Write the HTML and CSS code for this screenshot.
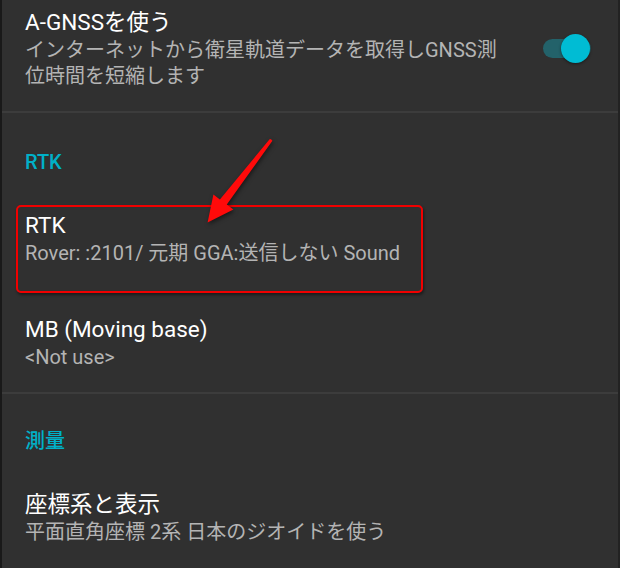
FILE: index.html
```html
<!DOCTYPE html>
<html lang="ja">
<head>
<meta charset="utf-8">
<link rel="stylesheet" href="styles.css">
</head>
<body>
<div class="screen">
  <div class="pref pref-first">
    <div class="pref-text">
      <div class="pref-title">A-GNSSを使う</div>
      <div class="pref-summary">インターネットから衛星軌道データを取得しGNSS測位時間を短縮します</div>
    </div>
    <div class="switch">
      <div class="switch-track"></div>
      <div class="switch-thumb"></div>
    </div>
  </div>
  <div class="divider"></div>
  <div class="category">RTK</div>
  <div class="pref">
    <div class="pref-text">
      <div class="pref-title">RTK</div>
      <div class="pref-summary">Rover: :2101/ 元期 GGA:送信しない Sound</div>
    </div>
  </div>
  <div class="pref pref-last">
    <div class="pref-text">
      <div class="pref-title">MB (Moving base)</div>
      <div class="pref-summary">&lt;Not use&gt;</div>
    </div>
  </div>
  <div class="divider"></div>
  <div class="category category-cjk">測量</div>
  <div class="pref">
    <div class="pref-text">
      <div class="pref-title">座標系と表示</div>
      <div class="pref-summary">平面直角座標 2系 日本のジオイドを使う</div>
    </div>
  </div>

  <div class="highlight-box"></div>
  <svg class="arrow" width="620" height="568" viewBox="0 0 620 568">
    <path d="M269.6,139.2 Q271,138.6 272.4,140.8 L226.8,204.6 L233.4,209.4 L207.6,222.4 L213.4,194.4 L219.9,199.4 Z" fill="#ff0a0a"/>
  </svg>
</div>
</body>
</html>
```

FILE: styles.css
```css
html, body {
  margin: 0;
  padding: 0;
  background: #303030;
}

.screen {
  position: relative;
  width: 620px;
  height: 568px;
  box-sizing: border-box;
  border-left: 2px solid #191919;
  border-right: 2px solid #222222;
  background: #303030;
  overflow: hidden;
  font-family: Roboto, "Noto Sans CJK JP", sans-serif;
}

.pref {
  display: flex;
  align-items: center;
  padding: 24px 23px;
}

.pref-first {
  padding-top: 7px;
  padding-bottom: 22px;
}

.pref-last {
  padding-bottom: 22px;
}

.pref-text {
  width: 482px;
}

.pref-title {
  font-size: 22.5px;
  line-height: 30px;
  color: #ffffff;
}

.pref-summary {
  font-size: 20px;
  line-height: 26px;
  color: #b4b4b4;
}

.switch {
  position: relative;
  width: 48px;
  height: 29px;
  margin-left: auto;
  margin-right: 4px;
}

.switch-track {
  position: absolute;
  left: 0;
  top: 5px;
  width: 48px;
  height: 19px;
  border-radius: 10px;
  background: #23626a;
}

.switch-thumb {
  position: absolute;
  right: 1px;
  top: 0;
  width: 29px;
  height: 29px;
  border-radius: 50%;
  background: #00bcd4;
  box-shadow: 0 1px 3px rgba(0, 0, 0, 0.45);
}

.divider {
  height: 2px;
  background: #3c3c3c;
}

.category {
  padding: 37px 23px 12px;
  font-size: 20px;
  line-height: 24px;
  font-weight: 500;
  color: #00b0c8;
}

.category-cjk {
  padding-top: 35px;
}

.highlight-box {
  position: absolute;
  left: 14px;
  top: 205px;
  width: 403px;
  height: 84px;
  border: 2px solid #f00000;
  border-radius: 5px;
  box-shadow: 1px 2px 3px rgba(0, 0, 0, 0.45);
}

.arrow {
  position: absolute;
  left: -2px;
  top: 0;
  filter: drop-shadow(1px 2px 2px rgba(0, 0, 0, 0.5));
}
```
